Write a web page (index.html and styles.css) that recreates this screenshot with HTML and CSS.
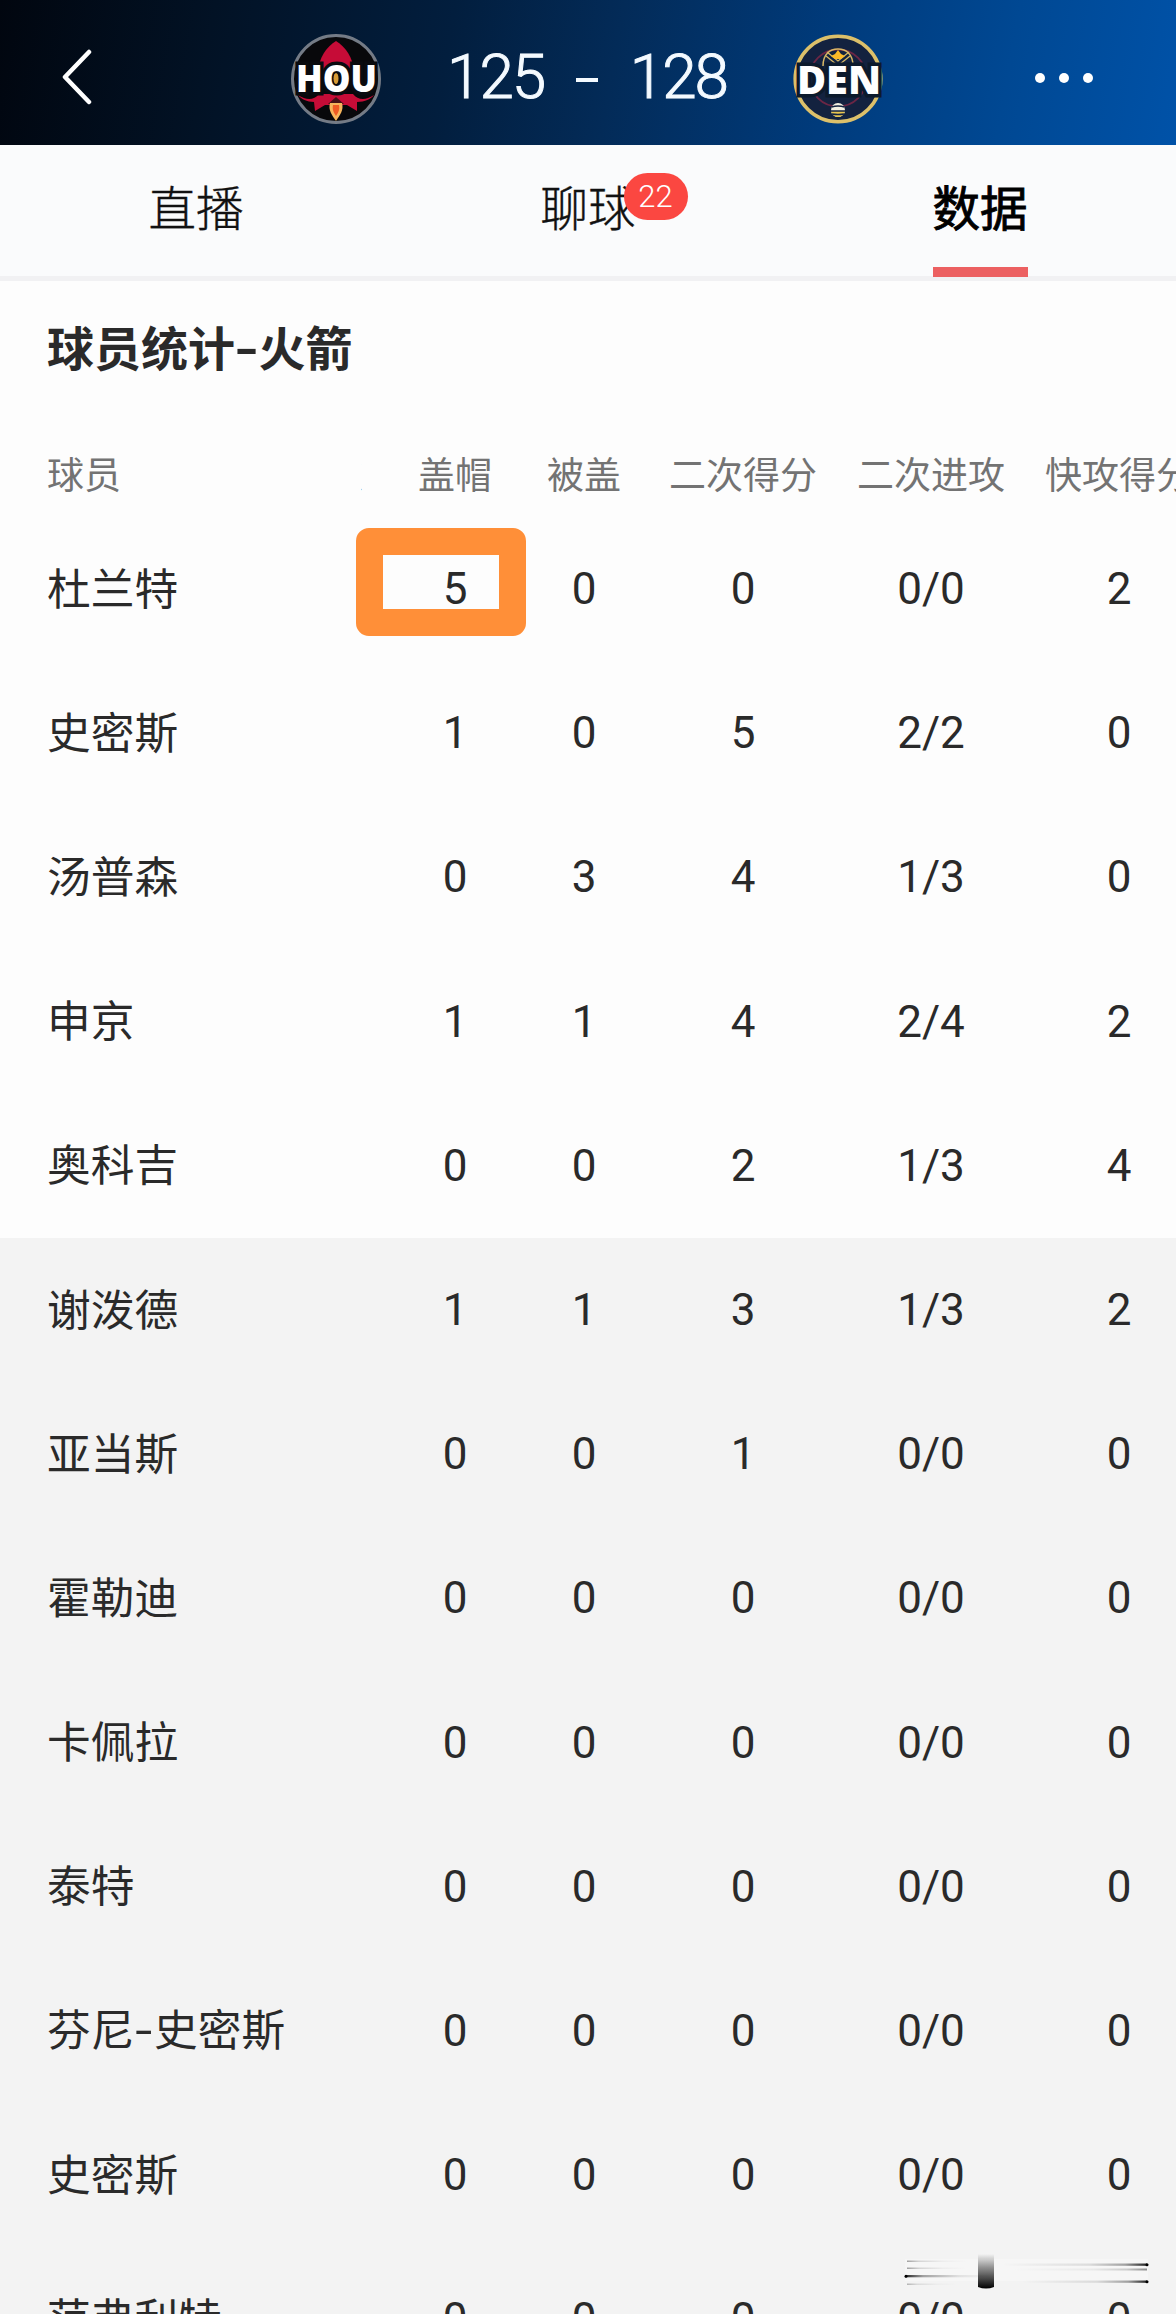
FILE: index.html
```
<!DOCTYPE html>
<html lang="zh-CN">
    <head>
        <meta charset="UTF-8" />
        <meta name="viewport" content="width=device-width, initial-scale=1.0" />
        <title>火箭 125 - 128 掘金</title>
        <link rel="stylesheet" href="styles.css">
    </head>
    <body>
        <header class="topbar">
            <svg class="back" viewBox="0 0 30 56" width="30" height="56">
                <path d="M27 3 L3 28 L27 53" />
            </svg>
            <div class="match">
                <svg class="logo" viewBox="0 0 90 90" width="90" height="90">
                    <circle cx="45" cy="45" r="43.5" fill="#08080b" stroke="#747b86" stroke-width="3" />
                    <path d="M45 7 C35 13 28 24 27 38 L63 38 C62 24 55 13 45 7 Z" fill="#c60c37" />
                    <path d="M7 61 C16 67 23 66 28 60 L62 60 C67 66 74 67 83 61 C80 65 74 68 66 68 L66 77 L56 71 L34 71 L24 77 L23 68 C16 68 10 65 7 61 Z" fill="#c60c37" />
                    <path d="M37 70 L45 63 L53 70 Z" fill="#451018" />
                    <path d="M39 69 H51 C53 76 49 81 45 87 C41 81 37 76 39 69 Z" fill="#f6b45c" />
                    <path d="M42 71 H48 C49 76 47 79 45 82 C43 79 41 76 42 71 Z" fill="#ee5a24" />
                    <text class="logo-text" x="5" y="58" textLength="81" lengthAdjust="spacingAndGlyphs">HOU</text>
                    <ellipse cx="45" cy="44.500" rx="2.500" ry="5.500" fill="#d79b35" />
                </svg>
                <div class="score"><span>125</span><i></i><span>128</span></div>
                <svg class="logo" viewBox="0 0 90 90" width="90" height="90">
                    <circle cx="45" cy="45" r="42.800" fill="#13223f" stroke="#dcc06a" stroke-width="3.600" />
                    <circle cx="45" cy="44" r="28.500" fill="none" stroke="#6b2645" stroke-width="1.800" />
                    <path d="M30 32 C30 20 37 15 45 15 C53 15 60 20 60 32" fill="none" stroke="#d8b865" stroke-width="1.500" />
                    <path d="M34 18 L45 27 L56 18 M33 22 L43 30 M57 22 L47 30" fill="none" stroke="#d8b865" stroke-width="1.300" />
                    <path d="M38 22 L42 20 L45 16 L48 20 L52 22 L48 25 H42 Z" fill="#fdb927" />
                    <circle cx="45" cy="76" r="7" fill="#f4f1e2" />
                    <path d="M38 77 H52 C51 81 48 83 45 83 C42 83 39 81 38 77 Z" fill="#e9c54e" />
                    <path d="M38.500 73 Q45 71 51.500 73 M38 77 H52 M39 80 Q45 81 51 80" fill="none" stroke="#13223f" stroke-width="1.400" />
                    <text class="logo-text den" x="4" y="60" textLength="84" lengthAdjust="spacingAndGlyphs">DEN</text>
                </svg>
            </div>
            <div class="more"><i></i><i></i><i></i></div>
        </header>

        <nav class="tabs">
            <a class="tab"><span>直播</span></a>
            <a class="tab"><span>聊球<b class="badge">22</b></span></a>
            <a class="tab active"><span>数据</span></a>
        </nav>

        <h2>球员统计<i class="dash">-</i>火箭</h2>

        <div class="table-wrap">
            <table>
                <colgroup>
                    <col class="c-name" />
                    <col class="c-cut" />
                    <col class="c-blk" />
                    <col class="c-blked" />
                    <col class="c-wide" />
                    <col class="c-wide" />
                    <col class="c-wide" />
                </colgroup>
                <thead>
                    <tr><th>球员</th><th><div class="cut">次</div></th><th>盖帽</th><th>被盖</th><th>二次得分</th><th>二次进攻</th><th>快攻得分</th></tr>
                </thead>
                <!-- 首发 -->
                <tbody>
                    <tr><td>杜兰特</td><td></td><td><span class="mark">5</span></td><td>0</td><td>0</td><td>0/0</td><td>2</td></tr>
                    <tr><td>史密斯</td><td></td><td>1</td><td>0</td><td>5</td><td>2/2</td><td>0</td></tr>
                    <tr><td>汤普森</td><td></td><td>0</td><td>3</td><td>4</td><td>1/3</td><td>0</td></tr>
                    <tr><td>申京</td><td></td><td>1</td><td>1</td><td>4</td><td>2/4</td><td>2</td></tr>
                    <tr><td>奥科吉</td><td></td><td>0</td><td>0</td><td>2</td><td>1/3</td><td>4</td></tr>
                </tbody>
                <!-- 替补 -->
                <tbody class="bench">
                    <tr><td>谢泼德</td><td></td><td>1</td><td>1</td><td>3</td><td>1/3</td><td>2</td></tr>
                    <tr><td>亚当斯</td><td></td><td>0</td><td>0</td><td>1</td><td>0/0</td><td>0</td></tr>
                    <tr><td>霍勒迪</td><td></td><td>0</td><td>0</td><td>0</td><td>0/0</td><td>0</td></tr>
                    <tr><td>卡佩拉</td><td></td><td>0</td><td>0</td><td>0</td><td>0/0</td><td>0</td></tr>
                    <tr><td>泰特</td><td></td><td>0</td><td>0</td><td>0</td><td>0/0</td><td>0</td></tr>
                    <tr><td>芬尼<i class="dash">-</i>史密斯</td><td></td><td>0</td><td>0</td><td>0</td><td>0/0</td><td>0</td></tr>
                    <tr><td>史密斯</td><td></td><td>0</td><td>0</td><td>0</td><td>0/0</td><td>0</td></tr>
                    <tr><td>范弗利特</td><td></td><td>0</td><td>0</td><td>0</td><td>0/0</td><td>0</td></tr>
                </tbody>
            </table>
        </div>

        <svg class="smudge" viewBox="0 0 250 40" width="250" height="40">
            <defs>
                <linearGradient id="fadeRight">
                    <stop offset="0" stop-color="#222" />
                    <stop offset="0.200" stop-color="#222" stop-opacity="0.400" />
                    <stop offset="0.600" stop-color="#222" stop-opacity="0.100" />
                    <stop offset="1" stop-color="#222" stop-opacity="0" />
                </linearGradient>
                <linearGradient id="fadeLeft">
                    <stop offset="0" stop-color="#222" stop-opacity="0" />
                    <stop offset="0.600" stop-color="#222" stop-opacity="0.120" />
                    <stop offset="0.850" stop-color="#222" stop-opacity="0.400" />
                    <stop offset="1" stop-color="#222" />
                </linearGradient>
                <linearGradient id="fadeDown" x2="0" y2="1">
                    <stop offset="0" stop-color="#111" stop-opacity="0" />
                    <stop offset="0.400" stop-color="#111" stop-opacity="0.450" />
                    <stop offset="1" stop-color="#000" />
                </linearGradient>
            </defs>
            <rect x="3" y="9" width="243" height="22" fill="#fff" opacity="0.300" />
            <rect x="5" y="10.500" width="60" height="1.500" fill="url(#fadeRight)" opacity="0.400" />
            <rect x="5" y="17.500" width="60" height="1.500" fill="url(#fadeRight)" opacity="0.400" />
            <rect x="3" y="25" width="90" height="2.300" fill="url(#fadeRight)" />
            <rect x="5" y="33.500" width="50" height="1.500" fill="url(#fadeRight)" opacity="0.300" />
            <rect x="100" y="13.500" width="145" height="2.300" fill="url(#fadeLeft)" />
            <rect x="110" y="18.500" width="135" height="2" fill="url(#fadeLeft)" opacity="0.500" />
            <rect x="120" y="30.500" width="125" height="2.300" fill="url(#fadeLeft)" />
            <circle cx="4" cy="26.200" r="1.500" />
            <circle cx="245" cy="14.700" r="1.500" />
            <circle cx="245" cy="31.700" r="1.500" />
            <path d="M76 4 H92 V37 Q84 40 76 37 Z" fill="url(#fadeDown)" />
        </svg>
    </body>
</html>
```

FILE: styles.css
```
* {
    box-sizing: border-box;
}

body {
    position: relative;
    width: 1176px;
    height: 2314px;
    margin: 0;
    overflow: hidden;
    background-color: #fdfdfd;
    color: #2a2a2a;
    font-family: Roboto, "Noto Sans CJK SC", sans-serif;
}

/* top bar */
.topbar {
    display: flex;
    align-items: center;
    height: 145px;
    padding: 12px 83px 0 62px;
    background: linear-gradient(100deg, #01060f 0%, #021225 18%, #021e3e 38%, #032b58 52%, #003b7c 70%, #004893 85%, #0052a8 100%);
}

.back {
    margin-bottom: 3px;
    fill: none;
    stroke: #fff;
    stroke-width: 4.5;
    stroke-linecap: round;
    stroke-linejoin: round;
}

.match {
    display: flex;
    align-items: center;
    margin-left: 199px;
}

.logo {
    display: block;
    overflow: visible;
}

.logo-text {
    font-family: "Open Sans", sans-serif;
    font-size: 37px;
    font-weight: 800;
    fill: #fff;
    stroke: #0a0b0f;
    stroke-width: 7;
    paint-order: stroke;
}

.den {
    font-size: 39px;
    stroke: #0c1a2c;
}

.score {
    display: flex;
    align-items: center;
    justify-content: space-between;
    width: 280px;
    height: 90px;
    margin: 0 66px;
    padding-bottom: 4px;
    color: #f4faff;
    font-size: 62px;
    font-weight: 300;
    line-height: 86px;
    letter-spacing: -2px;
    -webkit-text-stroke: 1px #f4faff;
}

.score i {
    width: 22px;
    height: 4px;
    margin-top: 7px;
    background-color: #f4faff;
}

.more {
    display: flex;
    gap: 14px;
    margin: 0 0 1px auto;
}

.more i {
    width: 10px;
    height: 10px;
    border-radius: 50%;
    background-color: #fff;
}

/* tabs */
.tabs {
    display: flex;
    height: 136px;
    border-bottom: 5px solid #f1f1f3;
    background-color: #fafbfc;
}

.tab {
    flex: 1;
    display: flex;
    justify-content: center;
    color: #111;
    font-size: 47.500px;
    font-weight: 300;
    line-height: 130px;
    -webkit-text-stroke: 0.400px #111;
}

.tab span {
    position: relative;
    height: 132px;
}

.active {
    color: #000;
    font-weight: 400;
    -webkit-text-stroke: 0.900px #000;
}

.active span {
    border-bottom: 10px solid #ec6061;
}

.badge {
    position: absolute;
    top: 28px;
    left: 83px;
    width: 64px;
    height: 47px;
    border-radius: 24px;
    background-color: #fb4741;
    color: #fff;
    font-size: 31px;
    font-weight: 300;
    line-height: 47px;
    text-align: center;
    -webkit-text-stroke: 0;
}

/* stats table */
h2 {
    margin: 0;
    padding: 34px 47px 0;
    font-size: 47px;
    font-weight: 700;
    line-height: 70px;
}

.dash {
    display: inline-block;
    width: 0.500em;
    font-style: normal;
    text-align: center;
    transform: scaleX(1.400);
}

td .dash {
    width: 0.450em;
}

.table-wrap {
    margin-top: 48px;
}

table {
    width: 1213px;
    border-collapse: collapse;
    table-layout: fixed;
}

.c-name {
    width: 361px;
}

.c-cut {
    width: 30px;
}

.c-blk {
    width: 128px;
}

.c-blked {
    width: 130px;
}

.c-wide {
    width: 188px;
}

th,
td {
    padding: 0;
    text-align: center;
    white-space: nowrap;
}

th {
    height: 84px;
    padding-bottom: 4px;
    color: #737373;
    font-size: 37px;
    font-weight: 400;
}

td {
    height: 144.200px;
    font-size: 44px;
}

th:first-child,
td:first-child {
    padding-left: 47px;
    text-align: left;
}

td:first-child {
    padding-bottom: 7px;
    font-size: 43.700px;
}

/* column scrolled under the name column, only its edge shows */
.cut {
    display: flex;
    justify-content: flex-end;
    width: 2px;
    overflow: hidden;
}

.bench {
    background-color: #f3f3f3;
}

.mark {
    position: relative;
}

.mark::before {
    content: "";
    position: absolute;
    top: -35px;
    left: -87px;
    width: 116px;
    height: 54px;
    box-sizing: content-box;
    border: 27px solid #ff8f38;
    border-radius: 13px;
}

.smudge {
    position: absolute;
    top: 2250px;
    left: 902px;
}
```
